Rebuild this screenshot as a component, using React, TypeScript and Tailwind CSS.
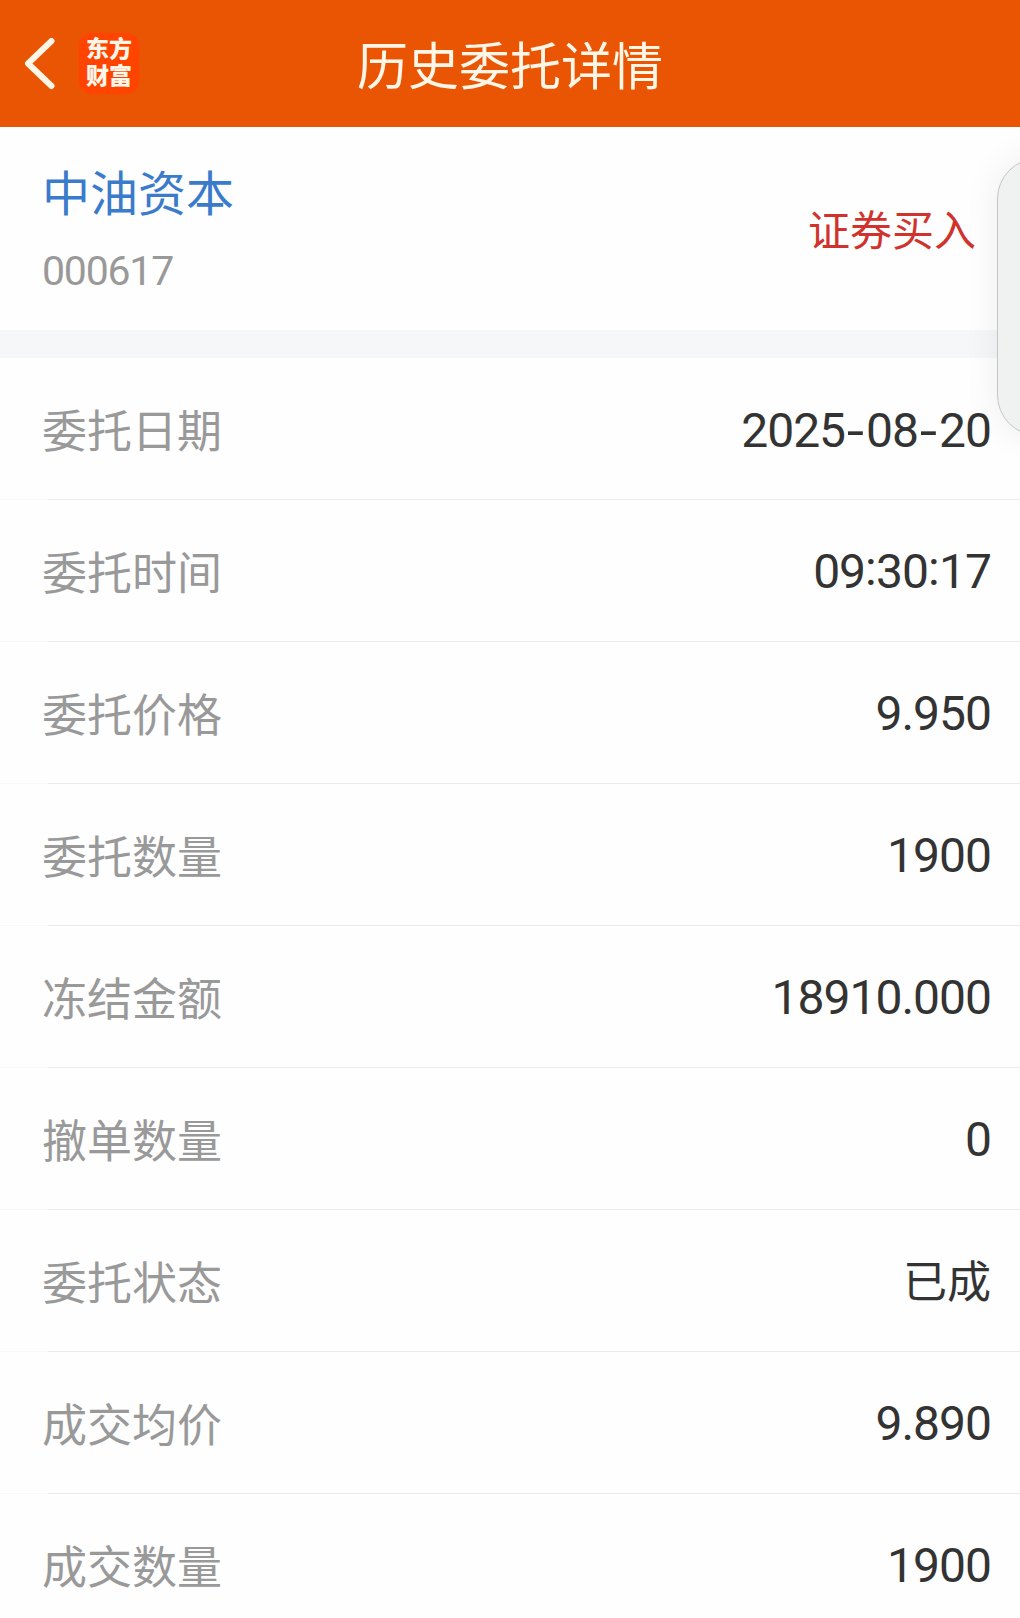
type OrderRow = {
  label: string;
  value: string;
};

const ROWS: OrderRow[] = [
  { label: "委托日期", value: "2025-08-20" },
  { label: "委托时间", value: "09:30:17" },
  { label: "委托价格", value: "9.950" },
  { label: "委托数量", value: "1900" },
  { label: "冻结金额", value: "18910.000" },
  { label: "撤单数量", value: "0" },
  { label: "委托状态", value: "已成" },
  { label: "成交均价", value: "9.890" },
  { label: "成交数量", value: "1900" },
];

// Separators sit a little higher and wider than the digits around them
function RowValue({ value }: { value: string }) {
  return (
    <span className="pt-[3px] text-[48px] leading-none tracking-[-1px] text-[#333]">
      {value.split(/([-:]|[\u4e00-\u9fff]+)/).map((part, i) => {
        if (part === "-") {
          return (
            <span
              key={i}
              className="relative top-px inline-block w-[21px] scale-x-125 text-center font-['Lato'] tracking-normal"
            >
              {part}
            </span>
          );
        }
        if (part === ":") {
          return (
            <span key={i} className="relative -top-[3px] inline-block w-[11px] text-center tracking-normal">
              {part}
            </span>
          );
        }
        if (/[\u4e00-\u9fff]/.test(part)) {
          return (
            <span key={i} className="text-[44px] tracking-normal">
              {part}
            </span>
          );
        }
        return part;
      })}
    </span>
  );
}

function Header() {
  return (
    <header className="grid h-[127px] grid-cols-[1fr_auto_1fr] items-center bg-[#ea5504] text-[#fff6e8]">
      <div className="flex items-center">
        <button aria-label="返回" className="ml-[24px]">
          <svg width="32" height="52" viewBox="0 0 32 52" fill="none">
            <path
              d="M27.5 3 L4 25.5 L27.5 48"
              stroke="currentColor"
              strokeWidth="6"
              strokeLinecap="round"
              strokeLinejoin="round"
            />
          </svg>
        </button>
        <div className="ml-[23px] flex h-[61px] w-[60px] flex-col items-center justify-center rounded-[12px] bg-[#ff4400] pb-[2px] text-[23px] leading-[27px] font-black">
          <span>东方</span>
          <span>财富</span>
        </div>
      </div>
      <h1 className="pt-[7px] text-[51px] leading-none">历史委托详情</h1>
    </header>
  );
}

export default function App() {
  return (
    <div className="relative h-[1618px] w-[1020px] overflow-hidden bg-[#fefefe] font-['Roboto','Noto_Sans_CJK_SC',sans-serif]">
      <Header />

      <section className="flex h-[203px] items-center justify-between pr-[44px] pl-[42px]">
        <div className="flex flex-col pt-[13px]">
          <h2 className="text-[48px] leading-[72px] text-[#3a7bcb]">中油资本</h2>
          <span className="text-[41px] leading-[80px] tracking-[-1.2px] text-[#999]">000617</span>
        </div>
        <span className="pt-[6px] text-[42px] leading-none text-[#d0332d]">证券买入</span>
      </section>

      <div className="h-[28px] bg-[#f6f7f9]" />

      <main>
        {ROWS.map((row) => (
          <div key={row.label}>
            <div className="flex h-[141px] items-center justify-between pr-[29px] pl-[42px]">
              <span className="pt-[7px] text-[45px] leading-none text-[#999]">{row.label}</span>
              <RowValue value={row.value} />
            </div>
            <div className="flex h-px">
              <div className="w-12 bg-[#f7f7f7]" />
              <div className="grow bg-[#ebebeb]" />
            </div>
          </div>
        ))}
      </main>

      {/* Edge drawer, mostly off screen */}
      <div className="absolute top-[158px] -right-[60px] h-[278px] w-[83px] rounded-[41px] border border-[#c4c6c6] bg-[#f0f1f1] shadow-[0_0_36px_rgba(0,0,0,0.07)]" />
    </div>
  );
}
